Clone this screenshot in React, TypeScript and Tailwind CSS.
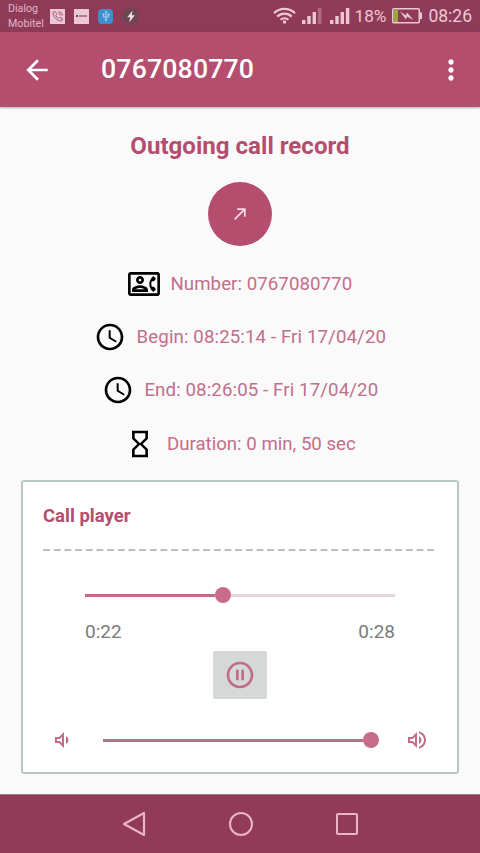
import type { ReactNode } from 'react'
import { FiPhoneCall } from 'react-icons/fi'
import {
  MdAccessTime,
  MdArrowBack,
  MdHourglassEmpty,
  MdMoreVert,
  MdOutlineContactPhone,
  MdOutlineVolumeDown,
  MdOutlineVolumeUp,
  MdPauseCircleOutline,
  MdUsb,
} from 'react-icons/md'

function SignalBars({ level }: { level: number }) {
  return (
    <svg className="h-4 w-5" viewBox="0 0 20 16" fill="#edc6d6">
      {[4, 8, 12, 16].map((h, i) => (
        <rect key={h} x={i * 5.3} y={16 - h} width="3.4" height={h} opacity={i < level ? 1 : 0.35} />
      ))}
    </svg>
  )
}

function StatusBar() {
  return (
    <div className="flex h-8 items-center bg-[#8f3b58] px-2 text-[#e3b5c6]">
      <div className="w-[42px] text-[10.700px] leading-[15px]">
        <p>Dialog</p>
        <p>Mobitel</p>
      </div>
      <div className="flex items-center gap-[9px]">
        <span className="flex size-[15px] items-center justify-center bg-[#ecc8d6]">
          <FiPhoneCall className="size-[11px] text-[#99536c]" />
        </span>
        <span className="flex size-[15px] items-center justify-center gap-px bg-[#ecc8d6]">
          <span className="size-[2px] bg-[#7c4055]" />
          <span className="h-[2px] w-2 bg-[#b07a8e]" />
        </span>
        <span className="flex size-[15px] items-center justify-center rounded-sm bg-[#3d8fce]">
          <MdUsb className="size-3 text-[#a9d3ef]" />
        </span>
        <span className="flex size-[17px] items-center justify-center rounded-full bg-[#6b4754]">
          <svg className="h-[13px] w-3" viewBox="0 0 12 12" fill="#f3dbe4">
            <path d="M7.600 0 2.200 6.800h3L4.200 12l5.600-7.200H6.700z" />
          </svg>
        </span>
      </div>
      <div className="ml-auto flex items-center text-[#edc6d6]">
        <svg className="mr-[6px] h-[17px] w-[23px]" viewBox="0 0 23 17" fill="none" stroke="#edc6d6" strokeWidth="2.200">
          <path d="M1 6.200a15 15 0 0 1 21 0" />
          <path d="M4.300 9.600a10.300 10.300 0 0 1 14.400 0" />
          <path d="M7.600 12.800a5.700 5.700 0 0 1 7.800 0" />
          <circle cx="11.500" cy="15" r="1.700" fill="#edc6d6" stroke="none" />
        </svg>
        <SignalBars level={3} />
        <span className="w-2" />
        <SignalBars level={4} />
        <span className="mt-[2px] ml-1 text-[17.200px]">18%</span>
        <svg className="mx-[6px] h-4 w-[30px]" viewBox="0 0 30 16">
          <rect x="0.75" y="0.75" width="26.500" height="14" rx="1" fill="none" stroke="#edc6d6" strokeWidth="1.500" />
          <rect x="1.500" y="1.500" width="4.500" height="12.500" fill="#97a83c" />
          <rect x="28" y="4.500" width="2" height="6.500" fill="#edc6d6" />
          <path d="m8 3.500 6 4 1-3 6.500 7.500-6.500-3.500-1 3z" fill="#edc6d6" />
        </svg>
        <span className="mt-px text-[17.500px]">08:26</span>
      </div>
    </div>
  )
}

function Toolbar() {
  return (
    <header className="flex h-[75px] items-center bg-[#b54d6f] pr-[13px] pl-[21px] text-white shadow-[0_1px_2px_rgba(0,0,0,0.3)]">
      <MdArrowBack className="size-8" />
      <h1 className="ml-12 text-[26.700px] font-medium tracking-[0.15px]">0767080770</h1>
      <MdMoreVert className="ml-auto size-8" />
    </header>
  )
}

function InfoRow({ icon, children }: { icon: ReactNode; children: ReactNode }) {
  return (
    <div className="flex h-[53.300px] items-center justify-center gap-[10.700px] text-[18.670px] text-[#c16f8a]">
      {icon}
      {children}
    </div>
  )
}

function CallPlayer() {
  return (
    <section className="mx-[21px] mt-[10px] h-[294px] rounded-[3px] border-2 border-[#b9c6c8] bg-white px-5">
      <h3 className="mt-[22px] text-[18.500px] leading-6 font-bold text-[#b54d6f]">Call player</h3>
      <svg className="mt-[21px] block h-[2px] w-[392px]">
        <line x1="0" y1="1" x2="392" y2="1" stroke="#b9bfbf" strokeWidth="2" strokeDasharray="7 3.670" />
      </svg>
      <div className="mx-[42px] mt-9 flex h-4 items-center">
        <span className="h-[3px] w-[130px] bg-[#c06c88]" />
        <span className="size-4 rounded-full bg-[#c76c8b]" />
        <span className="h-[3px] flex-1 bg-[#e5d3d8]" />
      </div>
      <div className="mx-[42px] mt-[17px] flex justify-between text-[19px] leading-6 text-[#7b7b7b]">
        <span>0:22</span>
        <span>0:28</span>
      </div>
      <button className="mx-auto mt-[7px] flex h-12 w-[54px] items-center justify-center rounded-[2px] bg-[#d6d7d7] text-[#c06c88]">
        <MdPauseCircleOutline className="size-8" />
      </button>
      <div className="mt-[33px] flex h-4 items-center text-[#c06c88]">
        <MdOutlineVolumeDown className="ml-[7px] size-6" />
        <span className="ml-[29px] h-[3px] w-[260px] bg-[#c06c88]" />
        <span className="size-4 rounded-full bg-[#c76c8b]" />
        <MdOutlineVolumeUp className="ml-[26px] size-6" />
      </div>
    </section>
  )
}

function NavBar() {
  return (
    <nav className="mt-auto flex h-[59px] items-center justify-center gap-[83px] border-t border-[#a0808c] bg-[#923b58] pr-px">
      <svg className="h-[26px] w-6" viewBox="0 0 24 26" fill="none" stroke="#eab4c8" strokeWidth="2.200" strokeLinejoin="round">
        <path d="M22 2v22L2 13z" />
      </svg>
      <span className="size-6 rounded-full border-2 border-[#eab4c8]" />
      <span className="size-[22px] rounded-[2px] border-2 border-[#eab4c8]" />
    </nav>
  )
}

export default function App() {
  return (
    <div className="flex h-[853px] w-[480px] flex-col bg-[#fafafa] font-[Roboto,sans-serif]">
      <StatusBar />
      <Toolbar />
      <main>
        <h2 className="mt-[23px] text-center text-[24.100px] leading-8 font-bold text-[#b54d6f]">Outgoing call record</h2>
        <div className="mx-auto mt-5 mb-[11px] flex size-16 items-center justify-center rounded-full bg-[#b54d6f]">
          <svg className="size-3" viewBox="0 0 12 12" fill="none" stroke="#f8dbe6" strokeWidth="1.700">
            <path d="M.6 11.400 10.800 1.200M3.200 1.200h7.600v7.600" />
          </svg>
        </div>
        <InfoRow icon={<MdOutlineContactPhone className="size-8 text-black" />}>
          <span className="tracking-[0.060px]">Number: 0767080770</span>
        </InfoRow>
        <InfoRow icon={<MdAccessTime className="size-8 text-black" />}>
          <span className="tracking-[0.110px]">Begin: 08:25:14 - Fri 17/04/20</span>
        </InfoRow>
        <InfoRow icon={<MdAccessTime className="size-8 text-black" />}>
          <span className="tracking-[0.110px]">End: 08:26:05 - Fri 17/04/20</span>
        </InfoRow>
        <InfoRow icon={<MdHourglassEmpty className="size-8 text-black" />}>
          <span>Duration: 0 min, 50 sec</span>
        </InfoRow>
        <CallPlayer />
      </main>
      <NavBar />
    </div>
  )
}
